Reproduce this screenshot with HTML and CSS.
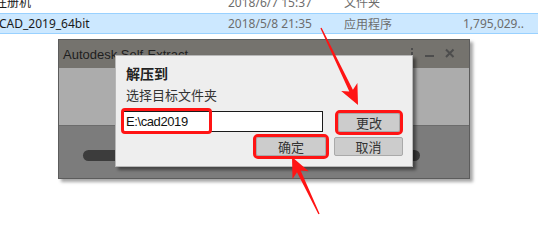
FILE: index.html
```html
<!DOCTYPE html>
<html lang="zh">
<head>
<meta charset="utf-8">
<link rel="stylesheet" href="styles.css">
</head>
<body>
<div class="explorer">
  <div class="row">
    <span class="name n1">注册机</span>
    <span class="meta">2018/6/7 15:37</span>
    <span class="meta">文件夹</span>
    <span class="meta"></span>
  </div>
  <div class="row selected">
    <span class="name">CAD_2019_64bit</span>
    <span class="meta">2018/5/8 21:35</span>
    <span class="meta">应用程序</span>
    <span class="meta">1,795,029..</span>
  </div>
</div>

<div class="window">
  <div class="titlebar">
    <span class="title">Autodesk Self-Extract</span>
    <div class="controls">
      <svg class="ico" width="6" height="12" viewBox="0 0 6 12"><rect x="2" y="0" width="2" height="2" fill="#4d4d4d"/><rect x="2" y="4" width="2" height="8" fill="#4d4d4d"/></svg>
      <svg class="ico" width="10" height="12" viewBox="0 0 10 12"><rect x="0" y="7" width="9" height="2" fill="#4d4d4d"/></svg>
      <svg class="ico" width="10" height="12" viewBox="0 0 10 12"><path d="M1 1.5 L8.5 9 M8.5 1.5 L1 9" stroke="#4d4d4d" stroke-width="2"/></svg>
    </div>
  </div>
  <div class="panel-light"></div>
  <div class="panel-dark"><div class="pill"></div></div>

  <div class="dialog">
    <div class="dlg-title">解压到</div>
    <div class="dlg-label">选择目标文件夹</div>
    <div class="dlg-row">
      <div class="input">E:\cad2019<div class="mark"></div></div>
      <div class="btn btn-change hl">更改</div>
    </div>
    <div class="dlg-row2">
      <div class="btn btn-ok hl">确定</div>
      <div class="btn btn-cancel">取消</div>
    </div>
  </div>
</div>

<svg class="arrows" width="538" height="230" viewBox="0 0 538 230">
  <polygon fill="#ff1414" points="320.4,28.3 349.3,91.5 341.2,90.9 358,105 357.4,83.1 352.9,89.7 321.6,27.7"/>
  <polygon fill="#ff1414" points="319.6,213.7 300.6,170.5 308.7,171.2 292,157 292.5,179 297,172.3 318.4,214.3"/>
</svg>
</body>
</html>
```

FILE: styles.css
```css
html, body {
  margin: 0;
  padding: 0;
}
body {
  width: 538px;
  height: 230px;
  overflow: hidden;
  position: relative;
  background: #ffffff;
  font-family: "Noto Sans", "Noto Sans CJK SC", sans-serif;
}

.explorer {
  margin-top: -9px;
}
.row {
  display: grid;
  grid-template-columns: 228px 116px 119px 1fr;
  align-items: center;
  height: 22px;
  font-size: 12px;
  white-space: nowrap;
  box-sizing: border-box;
}
.row.selected {
  height: 21px;
  background: #cce8ff;
  border-top: 1px solid #99d1ff;
  border-bottom: 1px solid #99d1ff;
}
.name {
  color: #1a1a1a;
  margin-left: -1px;
}
.name.n1 {
  margin-left: -5px;
}
.meta {
  color: #6d6d6d;
}

.window {
  position: relative;
  margin-top: 5px;
  margin-left: 58px;
  width: 412px;
  height: 140px;
  box-sizing: border-box;
  border: 1px solid #5c5c5c;
  display: flex;
  flex-direction: column;
  box-shadow: 3px 3px 3px rgba(0, 0, 0, 0.35);
}
.titlebar {
  height: 28px;
  background: #75736e;
  display: flex;
  align-items: center;
  justify-content: space-between;
  padding: 0 14px 0 4px;
}
.title {
  font-family: "Liberation Sans", sans-serif;
  font-size: 13px;
  color: #1e1e1e;
  padding-top: 1px;
}
.controls {
  display: flex;
  align-items: center;
  gap: 10px;
}
.ico {
  display: block;
}
.panel-light {
  height: 58px;
  background: #acacac;
  border-bottom: 1px solid #6c6c6c;
  box-sizing: border-box;
}
.panel-dark {
  flex: 1;
  background: #7c7c7c;
  padding-top: 24px;
  padding-left: 24px;
}
.pill {
  width: 337px;
  height: 11px;
  border-radius: 6px;
  background: #3c3c3c;
}

.dialog {
  position: absolute;
  left: 56px;
  top: 15px;
  width: 298px;
  height: 112px;
  box-sizing: border-box;
  background: #eeeeee;
  border: 1px solid #b8b8b8;
  box-shadow: 3px 3px 3px rgba(0, 0, 0, 0.45);
  font-family: "Noto Sans CJK SC", sans-serif;
  color: #222;
}
.dlg-title {
  margin: 7px 0 0 10px;
  font-size: 14px;
  font-weight: bold;
  line-height: 20px;
}
.dlg-label {
  margin: 3px 0 0 10px;
  font-size: 13px;
  line-height: 18px;
  color: #333;
}
.dlg-row {
  display: flex;
  align-items: center;
  margin: 7px 0 0 7px;
  gap: 15px;
}
.input {
  position: relative;
  width: 200px;
  height: 21px;
  box-sizing: border-box;
  background: #ffffff;
  border: 1px solid #1a1a1a;
  font-family: "Liberation Sans", sans-serif;
  font-size: 13px;
  letter-spacing: -0.4px;
  line-height: 19px;
  padding-left: 2px;
  color: #111;
}
.mark {
  position: absolute;
  left: -3px;
  top: -4px;
  width: 91px;
  height: 26px;
  box-sizing: border-box;
  border: 3px solid #ff1414;
  border-radius: 4px;
}
.btn {
  height: 19px;
  box-sizing: border-box;
  background: #cccccc;
  border: 1px solid #a9a9a9;
  border-radius: 2px;
  font-size: 13px;
  line-height: 17px;
  text-align: center;
  color: #333;
}
.btn.hl {
  outline: 3px solid #ff1414;
  outline-offset: 0px;
}
.btn-change {
  width: 62px;
  margin-top: 2px;
}
.dlg-row2 {
  display: flex;
  gap: 8px;
  margin: 5px 0 0 140px;
}
.btn-ok {
  width: 70px;
}
.btn-cancel {
  width: 69px;
}

.arrows {
  position: absolute;
  left: 0;
  top: 0;
  pointer-events: none;
}
```
